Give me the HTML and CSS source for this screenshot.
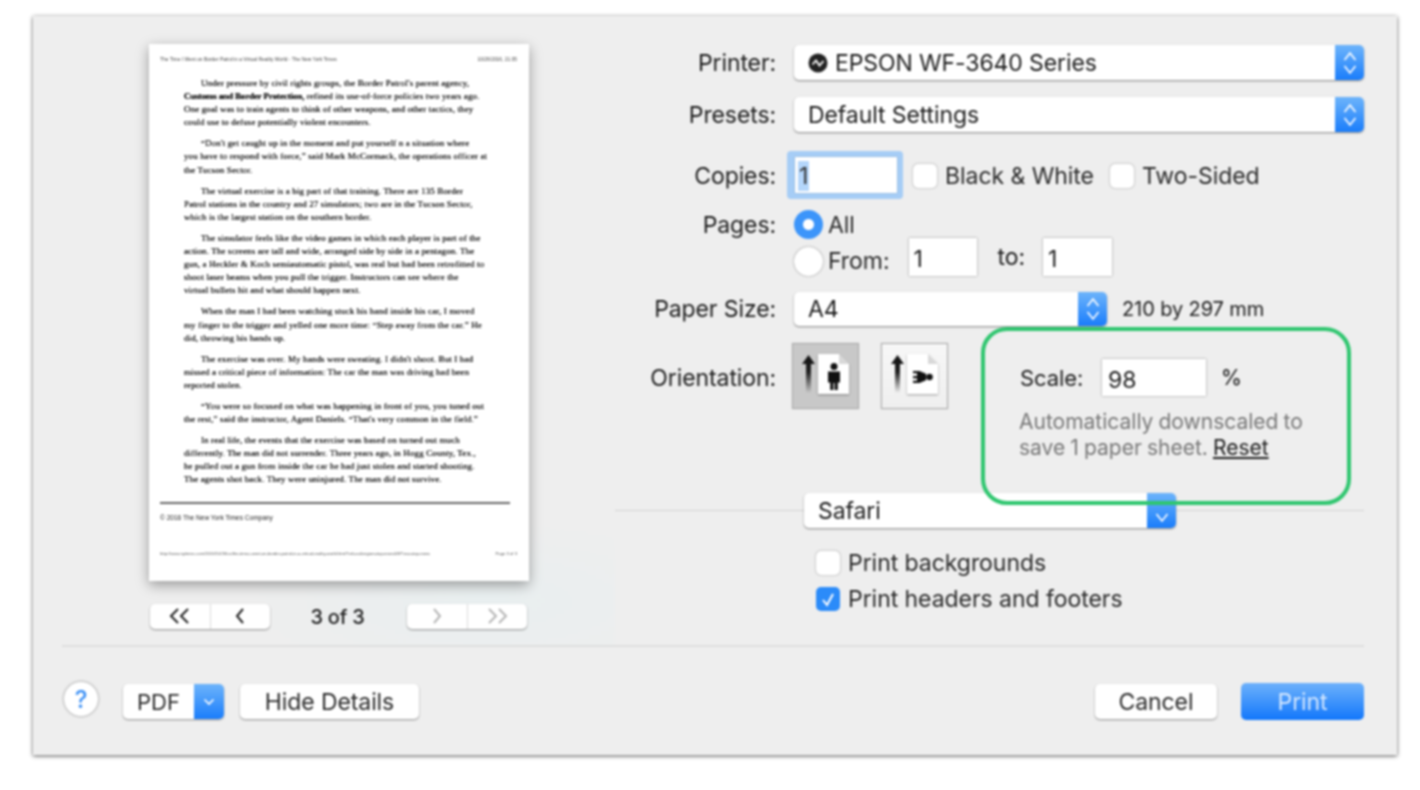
FILE: index.html
```html
<!DOCTYPE html>
<html lang="en">
<head>
<meta charset="utf-8">
<title>Print</title>
<link rel="stylesheet" href="styles.css">
</head>
<body>
<svg class="defs" width="0" height="0" aria-hidden="true">
  <defs>
    <linearGradient id="arrowfade" x1="0" y1="0" x2="0" y2="1">
      <stop offset="0" stop-color="#111"/><stop offset=".45" stop-color="#222"/><stop offset="1" stop-color="#222" stop-opacity="0"/>
    </linearGradient>
  </defs>
</svg>
<main class="dialog">
  <div class="main">
    <section class="preview">
      <div class="paper">
        <div class="paper-head"><span>The Time I Went on Border Patrol in a Virtual Reality World - The New York Times</span><span>10/26/2016, 21:35</span></div>
        <div class="article">
          <p>Under pressure by civil rights groups, the Border Patrol's parent agency,<br><b>Customs and Border Protection,</b> refined its use-of-force policies two years ago.<br>One goal was to train agents to think of other weapons, and other tactics, they<br>could use to defuse potentially violent encounters.</p>
          <p>“Don't get caught up in the moment and put yourself n a situation where<br>you have to respond with force,” said Mark McCormack, the operations officer at<br>the Tucson Sector.</p>
          <p>The virtual exercise is a big part of that training. There are 135 Border<br>Patrol stations in the country and 27 simulators; two are in the Tucson Sector,<br>which is the largest station on the southern border.</p>
          <p>The simulator feels like the video games in which each player is part of the<br>action. The screens are tall and wide, arranged side by side in a pentagon. The<br>gun, a Heckler &amp; Koch semiautomatic pistol, was real but had been retrofitted to<br>shoot laser beams when you pull the trigger. Instructors can see where the<br>virtual bullets hit and what should happen next.</p>
          <p>When the man I had been watching stuck his hand inside his car, I moved<br>my finger to the trigger and yelled one more time: “Step away from the car.” He<br>did, throwing his hands up.</p>
          <p>The exercise was over. My hands were sweating. I didn't shoot. But I had<br>missed a critical piece of information: The car the man was driving had been<br>reported stolen.</p>
          <p>“You were so focused on what was happening in front of you, you tuned out<br>the rest,” said the instructor, Agent Daniels. “That's very common in the field.”</p>
          <p>In real life, the events that the exercise was based on turned out much<br>differently. The man did not surrender. Three years ago, in Hogg County, Tex.,<br>he pulled out a gun from inside the car he had just stolen and started shooting.<br>The agents shot back. They were uninjured. The man did not survive.</p>
        </div>
        <hr class="paper-rule">
        <div class="copyright">© 2016 The New York Times Company</div>
        <div class="paper-foot"><span>http://www.nytimes.com/2016/10/26/us/the-time-i-went-on-border-patrol-in-a-virtual-reality-world.html?ref=us&amp;region=top-news&amp;WT.nav=top-news</span><span>Page 3 of 3</span></div>
      </div>
      <div class="pager">
        <div class="seg">
          <button class="seg-btn"><svg width="24" height="16" viewBox="0 0 24 16"><path class="pg" d="M10 1 3 8l7 7M20 1l-7 7 7 7"/></svg></button>
          <button class="seg-btn"><svg width="12" height="16" viewBox="0 0 12 16"><path class="pg" d="M9 1 3 8l6 7"/></svg></button>
        </div>
        <span class="page-count">3 of 3</span>
        <div class="seg">
          <button class="seg-btn"><svg width="12" height="16" viewBox="0 0 12 16"><path class="pg off" d="m3 1 6 7-6 7"/></svg></button>
          <button class="seg-btn"><svg width="24" height="16" viewBox="0 0 24 16"><path class="pg off" d="m4 1 7 7-7 7M14 1l7 7-7 7"/></svg></button>
        </div>
      </div>
    </section>

    <section class="form">
      <div class="row r-printer">
        <label class="lbl">Printer:</label>
        <div class="select full">
          <span class="select-text"><svg class="epson" width="20" height="20" viewBox="0 0 20 20"><circle cx="10" cy="10" r="9.5" fill="#222"/><path d="M4.500 11.500 8 7.500l3.500 5 4-4.500" fill="none" stroke="#fff" stroke-width="1.800"/></svg>EPSON WF-3640 Series</span>
          <span class="stepper"><svg width="16" height="28" viewBox="0 0 16 28"><path class="chev" d="m2.500 11 5.500-7 5.500 7M2.500 17l5.500 7 5.500-7"/></svg></span>
        </div>
      </div>
      <div class="row r-presets">
        <label class="lbl">Presets:</label>
        <div class="select full">
          <span class="select-text pad">Default Settings</span>
          <span class="stepper"><svg width="16" height="28" viewBox="0 0 16 28"><path class="chev" d="m2.500 11 5.500-7 5.500 7M2.500 17l5.500 7 5.500-7"/></svg></span>
        </div>
      </div>
      <div class="row r-copies">
        <label class="lbl">Copies:</label>
        <div class="focus-ring"><span class="copies-value"><span class="sel">1</span></span></div>
        <span class="check c-bw"></span><span class="txt">Black &amp; White</span>
        <span class="check c-two"></span><span class="txt">Two-Sided</span>
      </div>
      <div class="row r-pages">
        <label class="lbl lbl-pages">Pages:</label>
        <div class="pages-col">
          <div class="pages-all"><span class="radio on"></span><span class="txt">All</span></div>
          <div class="pages-from">
            <span class="radio low"></span><span class="txt t-from">From:</span>
            <span class="field f-pg">1</span><span class="txt t-to">to:</span><span class="field f-pg f-pg2">1</span>
          </div>
        </div>
      </div>
      <div class="row r-paper">
        <label class="lbl">Paper Size:</label>
        <div class="select paper-select">
          <span class="select-text pad">A4</span>
          <span class="stepper"><svg width="16" height="28" viewBox="0 0 16 28"><path class="chev" d="m2.500 11 5.500-7 5.500 7M2.500 17l5.500 7 5.500-7"/></svg></span>
        </div>
        <span class="dims">210 by 297 mm</span>
      </div>
      <div class="row r-orient">
        <label class="lbl lbl-orient">Orientation:</label>
        <button class="orient active">
          <svg width="65" height="64" viewBox="0 0 65 64">
            <path d="M15.500 11 9 20h4v29h5V20h4z" fill="url(#arrowfade)"/>
            <path class="sheet" d="M25 10h21l10 10v30H25z"/>
            <path class="fold" d="M46 10l10 10H46z"/>
            <circle cx="41" cy="22.500" r="3.500" fill="#111"/>
            <path d="M35 27.500h12v11h-2.200V46h-3.200v-7h-1.200v7h-3.200v-7.500H35z" fill="#111"/>
          </svg>
        </button>
        <button class="orient">
          <svg width="65" height="64" viewBox="0 0 65 64">
            <path d="M15.500 11 9 20h4v29h5V20h4z" fill="url(#arrowfade)"/>
            <path class="sheet" d="M25 10h21l10 10v30H25z"/>
            <path class="fold" d="M46 10l10 10H46z"/>
            <path d="M31 27h6.500L44 29.800v6.400L37.500 39H31v-2.200h4v-2.600h-4V32h4v-2.800h-4z" fill="#111"/>
            <circle cx="47.500" cy="33" r="3.300" fill="#111"/>
          </svg>
        </button>
      </div>
      <div class="row r-safari">
        <div class="select safari-select">
          <span class="select-text pad">Safari</span>
          <span class="stepper"><svg width="16" height="28" viewBox="0 0 16 28"><path class="chev" d="m2.500 17 5.500 7 5.500-7"/></svg></span>
        </div>
      </div>
      <div class="opt o-first"><span class="check"></span><span class="txt">Print backgrounds</span></div>
      <div class="opt o-second"><span class="check checked"><svg width="24" height="25" viewBox="0 0 24 25"><path d="m7 13 4 5 6-11" fill="none" stroke="#fff" stroke-width="2"/></svg></span><span class="txt">Print headers and footers</span></div>

      <aside class="scale-box">
        <div class="scale-row">
          <span class="scale-lbl">Scale:</span>
          <span class="field f-scale">98</span>
          <span class="scale-pct">%</span>
        </div>
        <p class="scale-note">Automatically downscaled to<br>save 1 paper sheet. <a class="reset">Reset</a></p>
      </aside>
    </section>
  </div>
  <div class="rule"></div>
  <footer class="footer">
    <span class="help">?</span>
    <div class="pdf"><span class="pdf-label">PDF</span><span class="pdf-arrow"><svg width="14" height="10" viewBox="0 0 14 10"><path class="chev" d="m2.500 2.500 4.500 4.500 4.500-4.500"/></svg></span></div>
    <button class="btn b-hide">Hide Details</button>
    <span class="spacer"></span>
    <button class="btn b-cancel">Cancel</button>
    <button class="btn b-print">Print</button>
  </footer>
</main>
</body>
</html>
```
FILE: styles.css
```css
* { box-sizing: border-box; }
html, body { margin: 0; height: 100%; background: #fff; overflow: hidden; }
body { padding: 16px 23px 0 33px; font-family: "Inter", "Liberation Sans", sans-serif; color: #333; }
.defs { position: absolute; }

.dialog {
  width: 1364px; height: 739px; display: flex; flex-direction: column;
  background: #eeeeee; box-shadow: 0 1px 4px rgba(0,0,0,.65);
  filter: blur(.8px);
}
.main { flex: 1; display: flex; }
.rule { height: 2px; margin: 0 33px 0 29px; background: #dedede; }

/* preview */
.preview {
  width: 582px; padding: 28px 0 0 116px;
  background: radial-gradient(ellipse 240px 80px at 78% 93%, #e9eff0, rgba(238,238,238,0));
}
.paper {
  width: 380px; height: 537px; background: #fff; padding: 13px 12px 0 11px;
  box-shadow: 0 4px 12px rgba(0,0,0,.36);
  display: flex; flex-direction: column;
}
.paper-head, .paper-foot {
  display: flex; justify-content: space-between; font-size: 4.900px; color: #444;
  white-space: nowrap; font-family: "Liberation Sans", sans-serif;
}
.paper-head { height: 9px; line-height: 5px; }
.article { margin: 11px 0 0 24px; font: 9px/13.100px "Liberation Serif", serif; color: #222; white-space: nowrap; letter-spacing: .12px; text-shadow: 0 0 .4px #222; }
.article p { margin: 0 0 8px; text-indent: 17px; }
.article b { color: #111; letter-spacing: -.13px; }
.paper-rule { width: 350px; border: 0; height: 2px; margin: 7px 0 0; background: #666; }
.copyright { margin-top: 9px; font: 6.550px/9px "Liberation Sans", sans-serif; color: #222; }
.paper-foot { margin-top: 29px; font-size: 4.200px; line-height: 5px; color: #555; overflow: hidden; }
.paper-foot span:first-child { flex: none; width: 325px; overflow: hidden; }

.pager { display: flex; align-items: center; margin: 22px 0 0 1px; width: 377px; justify-content: space-between; }
.seg { display: flex; width: 120px; height: 25px; background: #fff; border-radius: 5px; box-shadow: 0 1px 2px rgba(0,0,0,.4); }
.seg-btn { flex: 1; border: 0; background: none; padding: 0; display: flex; align-items: center; justify-content: center; }
.seg-btn + .seg-btn { border-left: 1px solid #dcdcdc; }
.pg { fill: none; stroke: #222; stroke-width: 2; }
.pg.off { stroke: #b5b5b5; }
.page-count { font-size: 20px; font-weight: 500; color: #222; margin: 2px 2px 0 0; letter-spacing: -.2px; }

/* form */
.form { position: relative; width: 749px; padding-top: 29px; }
.row { display: flex; align-items: center; }
.lbl { width: 161px; margin-right: 18px; text-align: right; font-size: 23px; letter-spacing: -.1px; white-space: nowrap; color: #1c1c1c; }
.txt { font-size: 23px; letter-spacing: -.05px; white-space: nowrap; color: #2a2a2a; }

.select {
  height: 35px; display: flex; align-items: center; background: #fff; border-radius: 5px;
  box-shadow: 0 1px 2px rgba(0,0,0,.45);
  font-size: 23px; letter-spacing: -.1px; color: #1c1c1c;
}
.full { width: 570px; }
.select-text { flex: 1; display: flex; align-items: center; padding-left: 14px; white-space: nowrap; }
.select-text.pad { padding-left: 14px; }
.epson { margin-right: 7px; }
.stepper {
  width: 29px; height: 35px; flex: none; display: flex; align-items: center; justify-content: center;
  border-radius: 0 5px 5px 0; background: linear-gradient(#6db4fb, #1a7dfb);
}
.chev { fill: none; stroke: #fff; stroke-width: 1.600; }

.r-presets { margin-top: 17px; }
.r-copies { margin-top: 19px; height: 48px; padding-top: 1px; }
.r-copies .lbl { margin-right: 11px; }
.focus-ring {
  width: 116px; height: 48px; margin-top: -1px; padding: 6px 6px 6px 8px; background: #a6cdf6; border-radius: 4px; flex: none;
}
.copies-value { display: flex; align-items: center; height: 100%; background: #fff; font-size: 23px; padding: 2px 0 0 3px; box-shadow: 0 0 1px rgba(0,0,0,.4); }
.sel { background: #b4d6fb; padding: 0 1px; line-height: 30px; }
.check {
  width: 24px; height: 24px; flex: none; background: #fff; border-radius: 5px;
  box-shadow: 0 0 2px rgba(0,0,0,.45); display: inline-block;
}
.c-bw { margin: 0 8px 0 10px; }
.c-two { margin: 0 8px 0 16px; }
.r-pages { margin-top: 11px; align-items: flex-start; }
.lbl-pages { line-height: 30px; }
.pages-col { display: flex; flex-direction: column; }
.pages-all { display: flex; align-items: center; height: 29px; }
.pages-from { display: flex; align-items: center; height: 38px; margin-top: -1px; }
.radio {
  width: 29px; height: 29px; flex: none; border-radius: 50%; background: #fff;
  box-shadow: 0 0 2px rgba(0,0,0,.5); margin-right: 5px;
}
.radio.low { margin-top: 8px; }
.radio.on { background: radial-gradient(circle, #fff 0 5px, #3c95fa 6px); box-shadow: none; }
.field { display: flex; align-items: center; background: #fff; box-shadow: 0 0 2px rgba(0,0,0,.45); font-size: 23px; color: #1c1c1c; }
.f-pg { width: 68px; height: 38px; padding: 3px 0 0 5px; }
.f-pg2 { width: 69px; }
.t-from { margin: 8px 19px 0 0; }
.t-to { margin: 0 18px 0 21px; color: #1c1c1c; }
.r-paper { margin-top: 16px; height: 34px; }
.paper-select { width: 313px; height: 34px; }
.paper-select .stepper { height: 34px; }
.dims { margin-left: 15px; font-size: 20px; letter-spacing: -.1px; color: #1c1c1c; white-space: nowrap; }
.r-orient { margin-top: 17px; align-items: flex-start; }
.lbl-orient { line-height: 70px; margin-right: 16px; }
.orient {
  width: 67px; height: 66px; padding: 0; flex: none; border: 1px solid #a9a9a9;
  background: linear-gradient(#f7f7f7, #efefef); box-shadow: 0 0 1px rgba(0,0,0,.2);
}
.orient svg { display: block; }
.orient.active { background: #c8c8c8; margin-right: 22px; }
.sheet { fill: #fff; filter: drop-shadow(0 1px 1px rgba(0,0,0,.35)); }
.fold { fill: #d8d8d8; }
.r-safari { margin-top: 80px; height: 35px; padding-left: 189px; position: relative; }
.r-safari::before { content: ""; position: absolute; left: 0; right: 0; top: 17px; height: 1px; background: #d2d2d2; }
.safari-select { width: 372px; position: relative; }
.opt { display: flex; align-items: center; margin-left: 201px; height: 25px; }
.opt .check { margin-right: 8px; }
.o-first { margin-top: 22px; }
.o-second { margin-top: 11px; }
.check.checked { background: #2b8bf9; box-shadow: none; }
.check.checked svg { display: block; }

.scale-box {
  position: absolute; left: 366px; top: 311px; width: 370px; height: 178px;
  border: 4px solid #2fc66f; border-radius: 26px; padding: 28px 0 0 35px;
}
.scale-row { display: flex; align-items: center; }
.scale-lbl { font-size: 22px; letter-spacing: -.1px; width: 82px; color: #1c1c1c; }
.f-scale { width: 104px; height: 37px; padding: 4px 0 0 6px; }
.scale-pct { margin-left: 15px; font-size: 21px; font-weight: 500; color: #222; }
.scale-note { margin: 13px 0 0 -1px; font-size: 21px; line-height: 26px; letter-spacing: 0; word-spacing: -.8px; color: #777; white-space: nowrap; }
.reset { color: #1c1c1c; text-decoration: underline; }

/* footer */
.footer { height: 108px; display: flex; align-items: flex-start; padding: 35px 33px 0 31px; }
.help {
  width: 34px; height: 34px; flex: none; border-radius: 50%; background: #fff; box-shadow: 0 0 3px rgba(0,0,0,.45);
  color: #3a8ff5; font-size: 24px; font-weight: 500; display: flex; align-items: center; justify-content: center;
}
.pdf {
  margin: 2px 0 0 25px; width: 101px; height: 35px; display: flex; background: #fff; border-radius: 5px;
  box-shadow: 0 1px 2px rgba(0,0,0,.4);
}
.pdf-label { flex: 1; display: flex; align-items: center; justify-content: center; font-size: 22px; color: #2a2a2a; }
.pdf-arrow { width: 30px; flex: none; display: flex; align-items: center; justify-content: center; border-radius: 0 5px 5px 0; background: linear-gradient(#6db4fb, #1a7dfb); }
.btn {
  height: 35px; margin-top: 2px; border: 0; padding: 0; background: #fff; border-radius: 5px;
  box-shadow: 0 1px 2px rgba(0,0,0,.4); font: 23px "Inter", "Liberation Sans", sans-serif; letter-spacing: -.1px; color: #2a2a2a;
}
.b-hide { width: 179px; margin-left: 16px; }
.spacer { flex: 1; }
.b-cancel { width: 122px; }
.b-print { width: 123px; height: 37px; margin: 1px 0 0 24px; color: #d4e7fe; background: linear-gradient(#6db1fb, #1277fb); box-shadow: none; }
```
